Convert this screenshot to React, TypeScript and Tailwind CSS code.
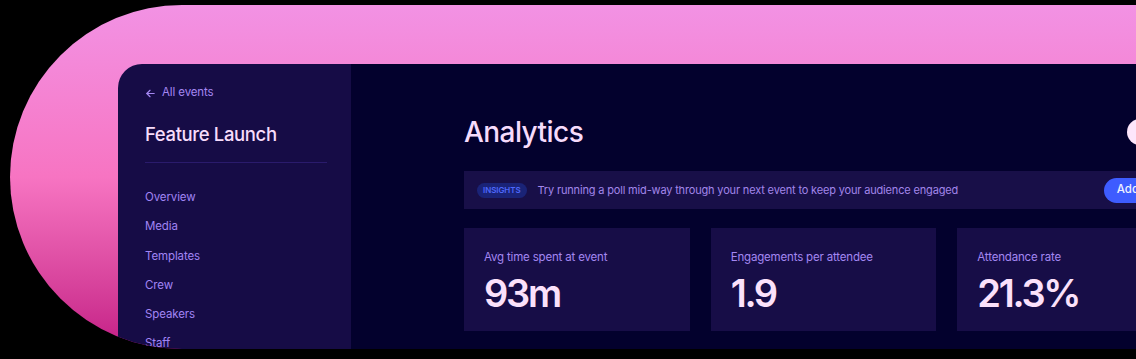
import React from "react";

const navItems = ["Overview", "Media", "Templates", "Crew", "Speakers", "Staff"];

const stats = [
    { label: "Avg time spent at event", value: "93m" },
    { label: "Engagements per attendee", value: "1.9" },
    { label: "Attendance rate", value: "21.3%" },
];

function ArrowLeft() {
    return (
        <svg width="11" height="11" viewBox="0 0 12 12" fill="none" stroke="currentColor" strokeWidth="1.3" strokeLinecap="round" strokeLinejoin="round">
            <path d="M10 6H2" />
            <path d="M5.5 2.5L2 6l3.5 3.5" />
        </svg>
    );
}

export default function App() {
    return (
        <div className="w-[1136px] h-[359px] bg-black overflow-hidden pt-[5px] pl-[10px] font-['Inter',sans-serif]">
            {/* Pink pill backdrop */}
            <div className="h-[344px] w-[1200px] rounded-l-full overflow-hidden bg-gradient-to-b from-[#f292e4] via-[#f774c2] to-[#c41b86] pt-[59px] pl-[108px]">
                <div className="flex h-full rounded-tl-[24px] overflow-hidden">
                    {/* Sidebar */}
                    <aside className="w-[233px] shrink-0 bg-[#160c46] pl-[27px] pr-[24px] pt-[21px]">
                        <div className="flex items-center gap-[6px] text-[11.5px] text-[#a487f2] tracking-[-0.01em] h-[16px]">
                            <ArrowLeft /> All events
                        </div>
                        <h1 className="mt-[21px] text-[18.5px] font-medium text-[#f6dcfb] tracking-[-0.02em] leading-[24px]">
                            Feature Launch
                        </h1>
                        <div className="mt-[16px] h-px bg-[#2a1b6c]" />
                        <nav className="mt-[26px] flex flex-col gap-[13.3px]">
                            {navItems.map((item) => (
                                <div key={item} className="text-[11.5px] leading-[16px] text-[#a184f4] tracking-[-0.01em]">
                                    {item}
                                </div>
                            ))}
                        </nav>
                    </aside>

                    {/* Main */}
                    <main className="flex-1 bg-[#03012d] overflow-hidden pl-[113px]">
                        <div className="w-[719px]">
                            <div className="flex items-center justify-between h-[107px] pt-[52px] pb-[23px]">
                                <h2 className="text-[28px] leading-[32px] font-medium text-[#f6dbfb] tracking-[-0.02em]">Analytics</h2>
                                <button className="h-[26px] px-[12px] rounded-full bg-[#fde6fb] text-[#0d0738] text-[11.5px] font-medium">
                                    Share
                                </button>
                            </div>

                            <div className="flex items-center h-[38px] bg-[#180f48] pl-[13px] pr-[8px]">
                                <span className="h-[15px] px-[6px] rounded-full bg-[#1a2377] text-[#4d67fb] text-[8px] font-semibold tracking-[-0.01em] flex items-center">
                                    INSIGHTS
                                </span>
                                <span className="ml-[11px] text-[11px] text-[#a286ea] tracking-[-0.015em]">
                                    Try running a poll mid-way through your next event to keep your audience engaged
                                </span>
                                <button className="ml-auto h-[25px] px-[13px] rounded-full bg-[#3e5cff] text-[#eef0ff] text-[11.5px] font-medium">
                                    Add poll
                                </button>
                            </div>

                            <div className="grid grid-cols-3 gap-[21px] mt-[19px]">
                                {stats.map((s) => (
                                    <div key={s.label} className="h-[103px] bg-[#170d47] pl-[20px] pt-[22px]">
                                        <div className="text-[11.5px] leading-[14px] text-[#a487f2] tracking-[-0.015em]">{s.label}</div>
                                        <div className="mt-[9px] text-[38px] leading-[40px] font-semibold text-[#fbe1fb] tracking-[-0.06em]">
                                            {s.value}
                                        </div>
                                    </div>
                                ))}
                            </div>
                        </div>
                    </main>
                </div>
            </div>
        </div>
    );
}
